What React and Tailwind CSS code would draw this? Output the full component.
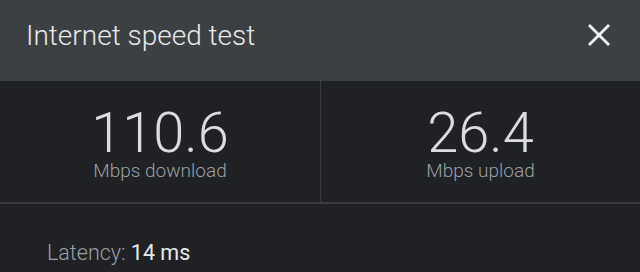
export default function App() {
  return (
    <div className="w-[640px] h-[272px] bg-[#202124] overflow-hidden" style={{ fontFamily: "Roboto, 'Liberation Sans', sans-serif" }}>
      <div className="h-[81px] bg-[#3c4043] flex justify-between pl-[26px] pr-[30px]">
        <div className="pt-[22px] text-[28px] leading-[28px] font-light text-[#e8eaed]">Internet speed test</div>
        <div className="pt-[24px]">
          <svg width="22" height="22" viewBox="0 0 22 22">
            <path d="M2 2 L20 20 M20 2 L2 20" stroke="#f1f3f4" strokeWidth="2.8" strokeLinecap="square" />
          </svg>
        </div>
      </div>
      <div className="grid grid-cols-2 h-[123px] border-b-2 border-[#3a3b3f]">
        <div className="flex flex-col items-center pt-[25px]">
          <div className="text-[56px] leading-[55px] font-light text-[#dadce0]">110.6</div>
          <div className="text-[19px] leading-[20px] font-light text-[#9aa0a6]">Mbps download</div>
        </div>
        <div className="flex flex-col items-center pt-[25px] border-l border-[#3a3b3f]">
          <div className="text-[56px] leading-[55px] font-light text-[#dadce0]">26.4</div>
          <div className="text-[19px] leading-[20px] font-light text-[#9aa0a6]">Mbps upload</div>
        </div>
      </div>
      <div className="pl-[47px] pt-[38px] text-[21.5px] leading-[21px]">
        <span className="text-[#9aa0a6] font-light">Latency: </span>
        <span className="text-[#e8eaed]">14 ms</span>
      </div>
    </div>
  );
}
